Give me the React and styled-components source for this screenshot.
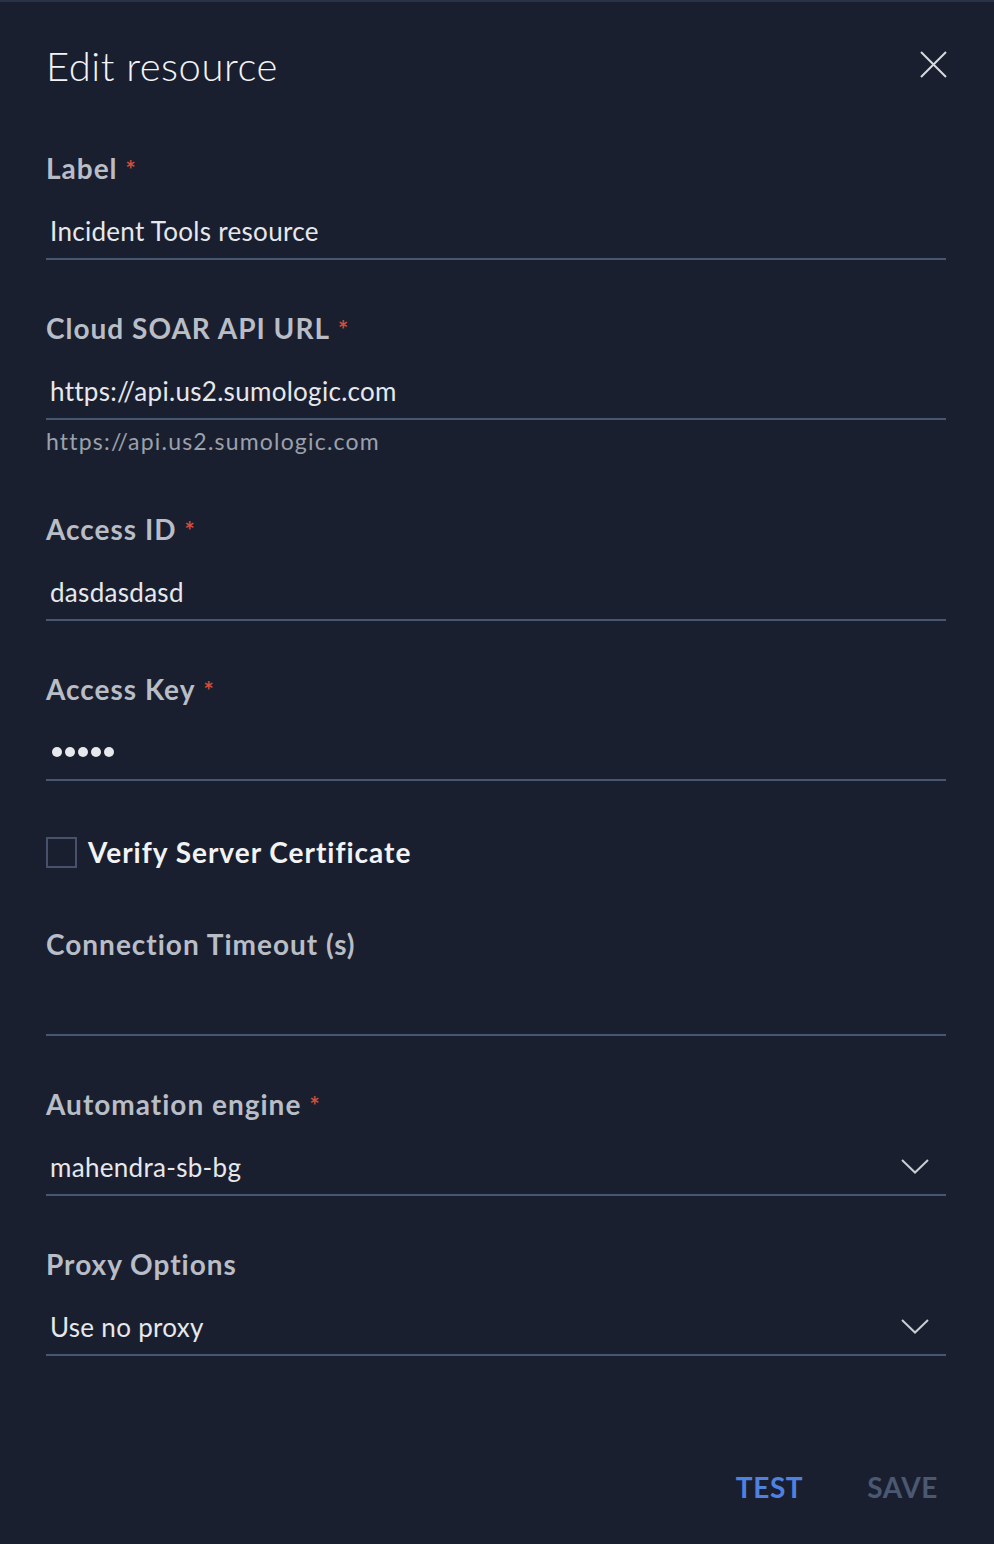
import React from 'react';
import styled, { createGlobalStyle } from 'styled-components';

const GlobalStyle = createGlobalStyle`
  html, body {
    margin: 0;
    padding: 0;
    background: #1a1f30;
  }
  body {
    font-family: Lato, "Noto Sans", sans-serif;
  }
`;

export default function App() {
  return (
    <>
      <GlobalStyle />
      <Panel>
        <Header>
          <Title>Edit resource</Title>
          <CloseButton aria-label="close">
            <svg width="27" height="27" viewBox="0 0 27 27">
              <path d="M1 1 L26 26 M26 1 L1 26" stroke="#d6d9df" strokeWidth="2" fill="none" />
            </svg>
          </CloseButton>
        </Header>

        <Field>
          <FieldLabel>
            Label<Required>*</Required>
          </FieldLabel>
          <InputRow>
            <Value>Incident Tools resource</Value>
          </InputRow>
        </Field>

        <Field>
          <FieldLabel>
            Cloud SOAR API URL<Required>*</Required>
          </FieldLabel>
          <InputRow>
            <Value>https://api.us2.sumologic.com</Value>
          </InputRow>
          <Helper>https://api.us2.sumologic.com</Helper>
        </Field>

        <Field>
          <FieldLabel>
            Access ID<Required>*</Required>
          </FieldLabel>
          <InputRow>
            <Value>dasdasdasd</Value>
          </InputRow>
        </Field>

        <Field>
          <FieldLabel>
            Access Key<Required>*</Required>
          </FieldLabel>
          <InputRow>
            <Dots>
              <Dot />
              <Dot />
              <Dot />
              <Dot />
              <Dot />
            </Dots>
          </InputRow>
        </Field>

        <CheckRow>
          <CheckBox />
          <CheckLabel>Verify Server Certificate</CheckLabel>
        </CheckRow>

        <Field>
          <FieldLabel>Connection Timeout (s)</FieldLabel>
          <InputRow>
            <Value />
          </InputRow>
        </Field>

        <Field>
          <FieldLabel>
            Automation engine<Required>*</Required>
          </FieldLabel>
          <InputRow>
            <Value>mahendra-sb-bg</Value>
            <Chevron />
          </InputRow>
        </Field>

        <Field>
          <FieldLabel>Proxy Options</FieldLabel>
          <InputRow>
            <Value>Use no proxy</Value>
            <Chevron />
          </InputRow>
        </Field>

        <Footer>
          <ActionButton primary>TEST</ActionButton>
          <ActionButton>SAVE</ActionButton>
        </Footer>
      </Panel>
    </>
  );
}

function Chevron() {
  return (
    <ChevronBox>
      <svg width="28" height="15" viewBox="0 0 28 15">
        <path d="M1 1 L14 13.5 L27 1" stroke="#c9cdd4" strokeWidth="2" fill="none" />
      </svg>
    </ChevronBox>
  );
}

const Panel = styled.div`
  width: 994px;
  min-height: 1544px;
  box-sizing: border-box;
  background: #1a1f30;
  border-top: 2px solid #28334a;
  padding: 0 48px 0 46px;
  display: flex;
  flex-direction: column;
`;

const Header = styled.div`
  display: flex;
  align-items: center;
  justify-content: space-between;
  height: 148px;
  padding-bottom: 20px;
  box-sizing: border-box;
`;

const Title = styled.h1`
  margin: 0;
  font-size: 40px;
  font-weight: 300;
  color: #f3f4f6;
  letter-spacing: 0.5px;
`;

const CloseButton = styled.button`
  background: none;
  border: 0;
  padding: 0;
  margin: -3px -1px 0 0;
  display: flex;
  cursor: pointer;
`;

const Field = styled.div`
  display: flex;
  flex-direction: column;
  margin-bottom: 50px;
`;

const FieldLabel = styled.div`
  height: 36px;
  line-height: 36px;
  font-size: 28px;
  font-weight: 700;
  color: #b8bdc6;
  letter-spacing: 1px;
`;

const Required = styled.span`
  color: #cf4f3a;
  margin-left: 8px;
  font-size: 24px;
`;

const InputRow = styled.div`
  display: flex;
  align-items: center;
  height: 74px;
  padding: 18px 17px 0 4px;
  box-sizing: border-box;
  border-bottom: 2px solid #475672;
`;

const Value = styled.div`
  flex: 1;
  font-size: 26px;
  font-weight: 400;
  color: #e6e8ec;
  letter-spacing: 0.3px;
`;

const Helper = styled.div`
  margin: 6px 0 5px;
  line-height: 30px;
  font-size: 23px;
  color: #9ba1ac;
  letter-spacing: 1.2px;
`;

const Dots = styled.div`
  flex: 1;
  display: flex;
  gap: 3px;
  padding-left: 2px;
`;

const Dot = styled.span`
  width: 10px;
  height: 10px;
  border-radius: 50%;
  background: #e6e8ec;
`;

const ChevronBox = styled.span`
  display: flex;
  margin-top: -2px;
`;

const CheckRow = styled.label`
  display: flex;
  align-items: center;
  gap: 11px;
  height: 42px;
  margin-bottom: 53px;
`;

const CheckBox = styled.span`
  width: 27px;
  height: 27px;
  border: 2px solid #46526b;
`;

const CheckLabel = styled.span`
  font-size: 28px;
  font-weight: 700;
  color: #f2f3f5;
  letter-spacing: 1px;
`;

const Footer = styled.div`
  display: flex;
  justify-content: flex-end;
  gap: 64px;
  margin-top: 64px;
  padding-right: 8px;
`;

const ActionButton = styled.button`
  background: none;
  border: 0;
  padding: 0;
  font-family: Lato, "Noto Sans", sans-serif;
  font-size: 28px;
  font-weight: 700;
  letter-spacing: 0.6px;
  color: ${(p) => (p.primary ? '#4f82e0' : '#4a5872')};
  cursor: pointer;
`;
